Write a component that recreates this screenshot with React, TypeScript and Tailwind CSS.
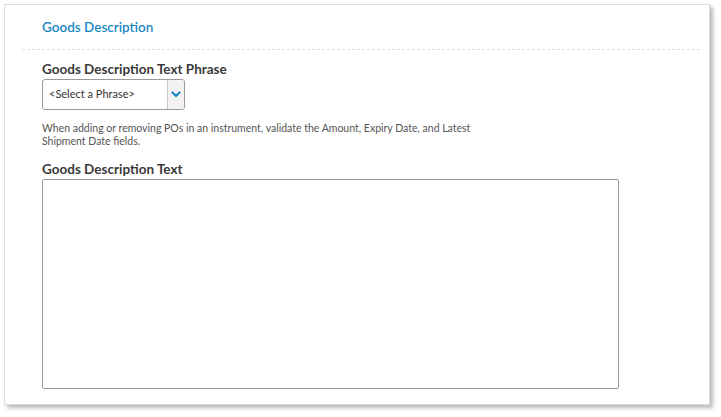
import React from "react";

export default function App() {
  return (
    <div className="w-[721px] h-[417px] bg-white" style={{ fontFamily: "Lato, 'Noto Sans', sans-serif" }}>
      <div className="pt-[4px] pl-[4px]">
        <div className="w-[706px] h-[401px] bg-white border border-[#dcdcdc] shadow-[3px_3px_4px_rgba(0,0,0,0.28)] flex flex-col">
          <div className="h-[44px] flex items-center pl-[37px] pt-[2px]">
            <span className="text-[13.5px] font-semibold text-[#1a87c2] leading-none">Goods Description</span>
          </div>
          <div className="ml-[17px] mr-[9px] border-t border-dashed border-[#e0e0e0]"></div>
          <div className="pl-[37px] pt-[10px] flex flex-col">
            <div className="text-[13.5px] font-bold text-[#3a3a3a] leading-[18px]">Goods Description Text Phrase</div>
            <div className="mt-[1px] w-[143px] h-[31px] border border-[#9a9a9a] rounded-[3px] flex overflow-hidden">
              <div className="flex-1 flex items-center pl-[6px] text-[11px] text-[#333]">&lt;Select a Phrase&gt;</div>
              <div className="w-[17px] bg-[#f2f2f2] border-l border-[#c8c8c8] flex items-center justify-center">
                <svg width="10" height="7" viewBox="0 0 10 7">
                  <path d="M1.5 1.5 L5 5 L8.5 1.5" fill="none" stroke="#1a87c2" strokeWidth="2.2" strokeLinecap="round" strokeLinejoin="round" />
                </svg>
              </div>
            </div>
            <div className="mt-[12px] text-[10.5px] leading-[13px] text-[#555] w-[445px]">
              When adding or removing POs in an instrument, validate the Amount, Expiry Date, and Latest Shipment Date fields.
            </div>
            <div className="mt-[12px] text-[13.5px] font-bold text-[#3a3a3a] leading-[18px]">Goods Description Text</div>
            <div className="mt-[1px] w-[577px] h-[210px] border border-[#9a9a9a] rounded-[2px]"></div>
          </div>
        </div>
      </div>
    </div>
  );
}
